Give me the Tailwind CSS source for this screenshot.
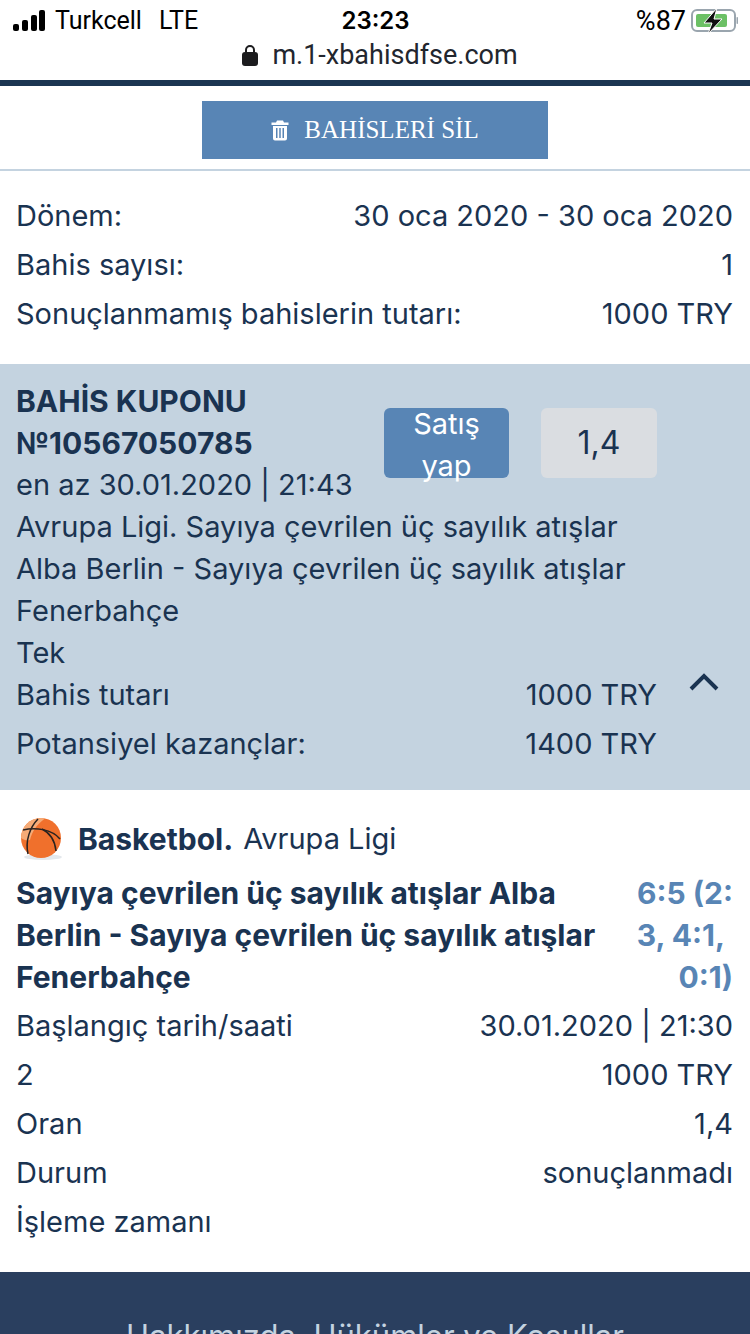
<!DOCTYPE html>
<html lang="tr">
<head>
    <meta charset="UTF-8">
    <meta name="viewport" content="width=device-width, initial-scale=1.0">
    <title>Bahis geçmişi</title>
    <script src="https://cdn.jsdelivr.net/npm/@tailwindcss/browser@4"></script>
</head>
<body class="w-[750px] h-[1334px] overflow-hidden bg-white font-['Inter',sans-serif] text-[29px] leading-[42px] text-[#1a3351]">

    <!-- status bar -->
    <div class="h-[38px] pt-[4px] pl-[13px] pr-[12px] flex items-center justify-between text-black text-[25px]">
        <div class="w-[280px] flex items-center">
            <svg width="34" height="22" viewBox="0 0 34 22" fill="#000">
                <rect x="0" y="14" width="6" height="7" rx="2"/>
                <rect x="9" y="10" width="6" height="11" rx="2"/>
                <rect x="18" y="5" width="6" height="16" rx="2"/>
                <rect x="26" y="0" width="6" height="21" rx="2"/>
            </svg>
            <span class="ml-[8px] font-['Roboto',sans-serif]">Turkcell</span>
            <span class="ml-[17px] font-['Roboto',sans-serif]">LTE</span>
        </div>
        <span class="font-semibold text-[24px]">23:23</span>
        <div class="w-[280px] flex items-center justify-end">
            <span class="font-['Roboto',sans-serif] text-[27px]">%87</span>
            <svg class="ml-[5px]" width="47" height="26" viewBox="0 0 47 26">
                <rect x="1" y="2" width="43" height="21" rx="5" fill="none" stroke="#9aa5ae" stroke-width="2"/>
                <rect x="5" y="6" width="31" height="13" rx="2" fill="#6cc065"/>
                <rect x="45.500" y="9" width="1.500" height="7" rx="0.700" fill="#9aa5ae"/>
                <path d="M26 0 L13 15 H21 L17 26 L31 11 H23 Z" fill="#111" stroke="#fff" stroke-width="1"/>
            </svg>
        </div>
    </div>

    <!-- address bar -->
    <div class="h-[42px] pb-[8px] pl-[10px] flex items-center justify-center text-[27px] text-[#22262e] font-['Roboto',sans-serif]">
        <svg width="16" height="22" viewBox="0 0 16 22" fill="#1c1c1e">
            <path d="M4 9V6a4 4 0 0 1 8 0v3" fill="none" stroke="#1c1c1e" stroke-width="2"/>
            <rect x="0" y="8" width="16" height="14" rx="3"/>
        </svg>
        <span class="ml-[14px]">m.1-xbahisdfse.com</span>
    </div>
    <div class="h-[6px] bg-[#1b3552]"></div>

    <!-- delete button -->
    <div class="h-[85px] pt-[15px] border-b-2 border-[#c4d3e0] flex justify-center">
        <button class="w-[346px] h-[58px] bg-[#5885b5] text-white flex items-center justify-center font-['Liberation_Serif',serif] text-[25px]">
            <svg width="18" height="22" viewBox="0 0 18 22" fill="#fff">
                <path d="M6 1.500h6l1 2h4.500v2.500h-17v-2.500h4.500z"/>
                <path fill-rule="evenodd" d="M2 7h14v12.500a2 2 0 0 1-2 2h-10a2 2 0 0 1-2-2z M5 9v10h1.500v-10z M8.250 9v10h1.500v-10z M11.500 9v10h1.500v-10z"/>
            </svg>
            <span class="ml-[15px]">BAHİSLERİ SİL</span>
        </button>
    </div>

    <!-- summary -->
    <div class="h-[193px] pl-[16px] pr-[17px] pt-[24px]">
        <div class="h-[49px] flex justify-between"><span>Dönem:</span><span>30 oca 2020 - 30 oca 2020</span></div>
        <div class="h-[49px] flex justify-between"><span>Bahis sayısı:</span><span>1</span></div>
        <div class="h-[49px] flex justify-between"><span>Sonuçlanmamış bahislerin tutarı:</span><span>1000 TRY</span></div>
    </div>

    <!-- coupon -->
    <div class="relative h-[426px] bg-[#c4d3e0] pl-[16px] pr-[93px] pt-[16px]">
        <div class="flex">
            <div class="w-[368px]">
                <div class="font-bold text-[30px]">BAHİS KUPONU<br>№10567050785</div>
                <div>en az 30.01.2020 | 21:43</div>
            </div>
            <div class="flex pt-[28px] gap-[32px]">
                <div class="w-[125px] h-[70px] rounded-[6px] bg-[#5885b5] text-white text-center">
                    <div class="-mt-[5px]">Satış<br>yap</div>
                </div>
                <div class="w-[116px] h-[70px] rounded-[6px] bg-[#dadde1] flex items-center justify-center text-[32px]">1,4</div>
            </div>
        </div>
        <div>Avrupa Ligi. Sayıya çevrilen üç sayılık atışlar</div>
        <div>Alba Berlin - Sayıya çevrilen üç sayılık atışlar</div>
        <div>Fenerbahçe</div>
        <div>Tek</div>
        <div class="h-[49px] flex justify-between"><span>Bahis tutarı</span><span>1000 TRY</span></div>
        <div class="h-[49px] flex justify-between"><span>Potansiyel kazançlar:</span><span>1400 TRY</span></div>
        <svg class="absolute left-[689px] top-[309px]" width="30" height="18" viewBox="0 0 30 18" fill="none" stroke="#1a3351" stroke-width="4">
            <path d="M2 16 L15 3 L28 16"/>
        </svg>
    </div>

    <!-- bet detail -->
    <div class="h-[482px] pl-[16px] pr-[17px] pt-[28px]">
        <div class="h-[42px] flex items-center">
            <svg class="ml-[4px]" width="44" height="44" viewBox="0 0 44 44">
                <ellipse cx="23" cy="40" rx="19" ry="3" fill="#e4e8ec"/>
                <circle cx="21" cy="21" r="20" fill="#f0702c"/>
                <path d="M21 1a20 20 0 0 0-20 20c3 2 6 3 9 2 2-8 6-15 15-21.500z" fill="#f5ab77"/>
                <g fill="none" stroke="#2a2320" stroke-width="1.500">
                    <path d="M18 2C10 10 5 24 8 37"/>
                    <path d="M3 13C15 10 32 12 40 22"/>
                    <path d="M22 12C30 16 35 24 36 34"/>
                </g>
            </svg>
            <span class="ml-[14px] font-bold text-[30px]">Basketbol.</span>
            <span class="ml-[10px]">Avrupa Ligi</span>
        </div>
        <div class="mt-[12px] flex justify-between font-bold text-[30px]">
            <div class="w-[590px]">Sayıya çevrilen üç sayılık atışlar Alba Berlin - Sayıya çevrilen üç sayılık atışlar Fenerbahçe</div>
            <div class="w-[110px] text-right text-[#5885b5]">6:5 (2:<br><span class="pr-[8px]">3, 4:1,</span><br>0:1)</div>
        </div>
        <div class="mt-[3px] h-[49px] flex justify-between items-center"><span>Başlangıç tarih/saati</span><span>30.01.2020 | 21:30</span></div>
        <div class="h-[49px] flex justify-between items-center"><span>2</span><span>1000 TRY</span></div>
        <div class="h-[49px] flex justify-between items-center"><span>Oran</span><span>1,4</span></div>
        <div class="h-[49px] flex justify-between items-center"><span>Durum</span><span>sonuçlanmadı</span></div>
        <div class="h-[49px] flex items-center"><span>İşleme zamanı</span></div>
    </div>

    <!-- footer -->
    <div class="h-[62px] overflow-hidden bg-[#2a3f5f] pt-[43px] text-center text-[31px] text-[#c4d3e0]">Hakkımızda, Hükümler ve Koşullar</div>
</body>
</html>
